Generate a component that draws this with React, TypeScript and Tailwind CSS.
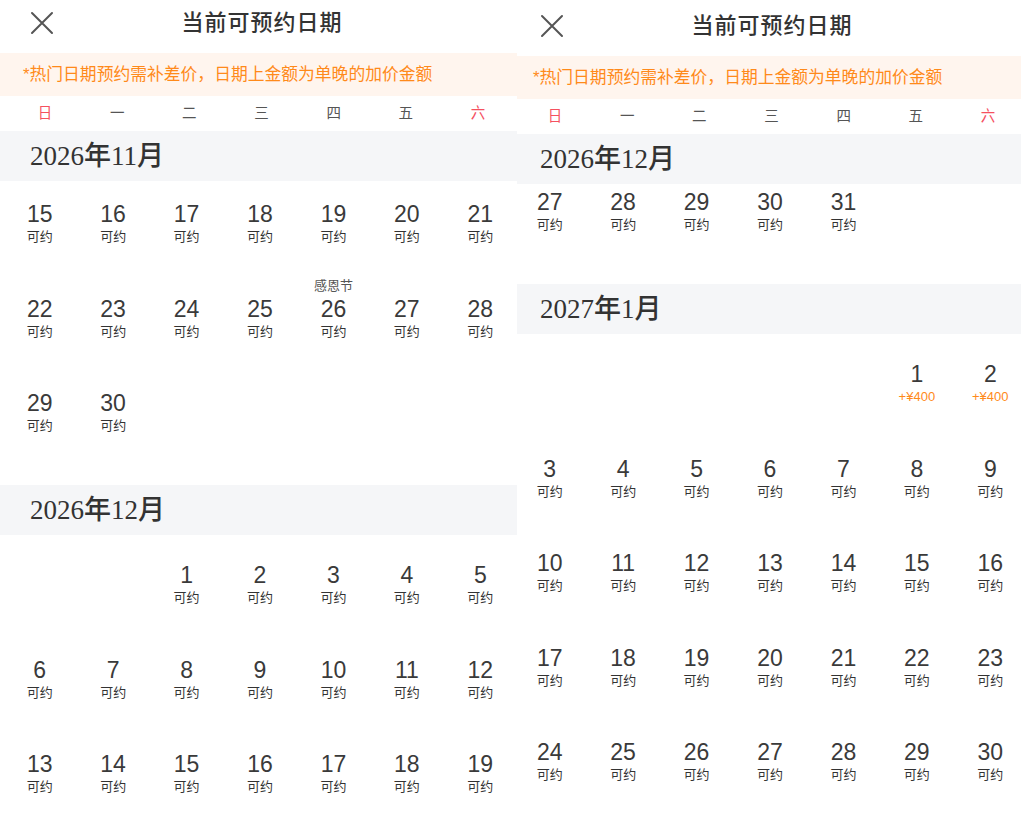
import React, { useLayoutEffect, useRef } from 'react';

type Cell = { day: number; sub: string; holiday?: string; hot?: boolean } | null;

const WEEKDAYS = ['日', '一', '二', '三', '四', '五', '六'];

// 加价日期 / 节日
const PRICES: Record<string, string> = { '2027-1-1': '+¥400', '2027-1-2': '+¥400' };
const HOLIDAYS: Record<string, string> = { '2026-11-26': '感恩节' };

const buildMonth = (year: number, month: number): Cell[] => {
  const first = new Date(year, month - 1, 1).getDay();
  const total = new Date(year, month, 0).getDate();
  const cells: Cell[] = Array.from({ length: first }, () => null);
  for (let d = 1; d <= total; d++) {
    const key = `${year}-${month}-${d}`;
    cells.push({
      day: d,
      sub: PRICES[key] ?? '可约',
      hot: !!PRICES[key],
      holiday: HOLIDAYS[key],
    });
  }
  return cells;
};

const MONTHS = [
  { year: 2026, month: 11 },
  { year: 2026, month: 12 },
  { year: 2027, month: 1 },
];

const CloseIcon = () => (
  <svg width="24" height="24" viewBox="0 0 24 24" fill="none" stroke="#555" strokeWidth={2} strokeLinecap="round">
    <path d="M2 2L22 22M22 2L2 22" />
  </svg>
);

const DayCell: React.FC<{ cell: Cell }> = ({ cell }) => (
  <div className="h-[94.5px] flex flex-col items-center pt-[8px]">
    {cell && (
      <>
        <div className="h-[18px] text-[13px] leading-[18px] text-[#555]">{cell.holiday ?? ''}</div>
        <div className="text-[23px] leading-[28px] text-[#3a3a3a]">{cell.day}</div>
        <div className={`text-[13px] leading-[18px] ${cell.hot ? 'text-[#ff8a1a]' : 'text-[#333]'}`}>{cell.sub}</div>
      </>
    )}
  </div>
);

const MonthBlock: React.FC<{ year: number; month: number }> = ({ year, month }) => {
  const cells = buildMonth(year, month);
  return (
    <section className="pb-[27.5px]">
      <div className="sticky top-0 z-10 h-[50px] flex items-center pl-[30px] bg-[#f5f6f8] text-[27px] text-[#333]">
        <span className="font-['Liberation_Serif','Noto_Sans_CJK_SC',serif]">{year}</span>
        <span className="font-medium">年</span>
        <span className="font-['Liberation_Serif','Noto_Sans_CJK_SC',serif]">{month}</span>
        <span className="font-medium">月</span>
      </div>
      <div className="grid grid-cols-7 px-[3px]">
        {cells.map((c, i) => (
          <DayCell key={i} cell={c} />
        ))}
      </div>
    </section>
  );
};

const Panel: React.FC<{ scroll: number; height: string }> = ({ scroll, height }) => {
  const listRef = useRef<HTMLDivElement>(null);

  useLayoutEffect(() => {
    if (listRef.current) listRef.current.scrollTop = scroll;
  }, [scroll]);

  return (
    <div className={`w-[520px] ${height} bg-white rounded-b-[10px] flex flex-col overflow-hidden font-['Liberation_Sans','Noto_Sans_CJK_SC',sans-serif]`}>
      {/* 标题栏 */}
      <div className="h-[53px] pb-[9px] flex items-center relative">
        <div className="absolute left-[30px] top-[11px]">
          <CloseIcon />
        </div>
        <div className="flex-1 text-center text-[22px] font-medium text-[#333] tracking-[1px] pl-[4px]">当前可预约日期</div>
      </div>

      {/* 提示 */}
      <div className="h-[43px] flex items-center pl-[23px] bg-[#fff5ee] text-[16.8px] text-[#ff8a1a]">
        *热门日期预约需补差价，日期上金额为单晚的加价金额
      </div>

      {/* 星期 */}
      <div className="h-[35px] grid grid-cols-7 pl-[9px] pr-[6px] items-center text-[14.5px] text-[#555]">
        {WEEKDAYS.map((w, i) => (
          <div key={w} className={`text-center ${i === 0 || i === 6 ? 'text-[#f5515f]' : ''}`}>
            {w}
          </div>
        ))}
      </div>

      <div ref={listRef} className="flex-1 overflow-hidden">
        {MONTHS.map(m => (
          <MonthBlock key={`${m.year}-${m.month}`} year={m.year} month={m.month} />
        ))}
      </div>
    </div>
  );
};

const App: React.FC = () => {
  return (
    <div className="w-[1021px] h-[815px] bg-white flex overflow-hidden">
      <div className="w-[517px] shrink-0 overflow-hidden">
        <Panel scroll={196} height="h-[797px]" />
      </div>
      <div className="w-[504px] shrink-0 overflow-hidden">
        <div className="-ml-[7px] mt-[3px]">
          <Panel scroll={950} height="h-[794px]" />
        </div>
      </div>
    </div>
  );
};

export default App;
